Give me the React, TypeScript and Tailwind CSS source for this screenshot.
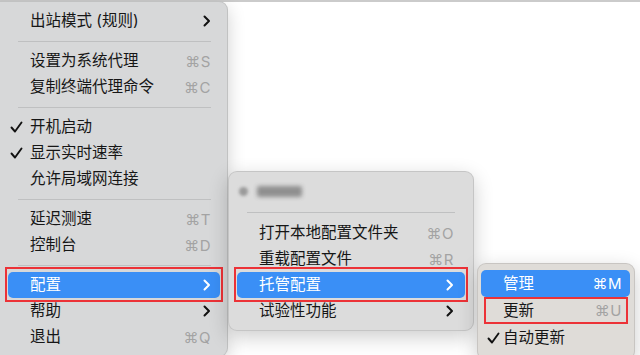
type Item =
  | { kind: "sep" }
  | {
      kind: "row";
      label: string;
      shortcut?: string;
      sub?: boolean;
      checked?: boolean;
      active?: boolean;
      box?: string;
    };

const outerBox = "-inset-x-[3px] -top-[5px] -bottom-[4px]";

const mainMenu: Item[] = [
  { kind: "row", label: "出站模式 (规则)", sub: true },
  { kind: "sep" },
  { kind: "row", label: "设置为系统代理", shortcut: "⌘S" },
  { kind: "row", label: "复制终端代理命令", shortcut: "⌘C" },
  { kind: "sep" },
  { kind: "row", label: "开机启动", checked: true },
  { kind: "row", label: "显示实时速率", checked: true },
  { kind: "row", label: "允许局域网连接" },
  { kind: "sep" },
  { kind: "row", label: "延迟测速", shortcut: "⌘T" },
  { kind: "row", label: "控制台", shortcut: "⌘D" },
  { kind: "sep" },
  { kind: "row", label: "配置", sub: true, active: true, box: outerBox },
  { kind: "row", label: "帮助", sub: true },
  { kind: "row", label: "退出", shortcut: "⌘Q" },
];

const configMenu: Item[] = [
  { kind: "row", label: "打开本地配置文件夹", shortcut: "⌘O" },
  { kind: "row", label: "重载配置文件", shortcut: "⌘R" },
  { kind: "row", label: "托管配置", sub: true, active: true, box: outerBox },
  { kind: "row", label: "试验性功能", sub: true },
];

const hostedMenu: Item[] = [
  { kind: "row", label: "管理", shortcut: "⌘M", active: true },
  { kind: "row", label: "更新", shortcut: "⌘U", box: "left-[3px] right-[2px] top-0 bottom-0" },
  { kind: "row", label: "自动更新", checked: true },
];

const font = "font-['Inter','Noto_Sans_CJK_SC','DejaVu_Sans',sans-serif]";

function Chevron({ white }: { white?: boolean }) {
  return (
    <svg width="8" height="12" viewBox="0 0 8 12" fill="none">
      <path
        d="M1.5 1.5l4.5 4.5-4.5 4.5"
        stroke={white ? "#ffffff" : "#111111"}
        strokeWidth="2"
        strokeLinecap="round"
        strokeLinejoin="round"
      />
    </svg>
  );
}

function Check() {
  return (
    <svg width="13" height="12" viewBox="0 0 13 12" fill="none">
      <path
        d="M1.5 6.5l3.5 4L11.5 1.5"
        stroke="#111111"
        strokeWidth="1.9"
        strokeLinecap="round"
        strokeLinejoin="round"
      />
    </svg>
  );
}

function Separator({ inset, h }: { inset: string; h: string }) {
  return (
    <div className={`flex items-center ${h} ${inset}`}>
      <div className="h-px w-full bg-[#bfc0c1]"></div>
    </div>
  );
}

function Row({
  item,
  h,
  mx,
  checkPl,
  pr,
}: {
  item: Extract<Item, { kind: "row" }>;
  h: string;
  mx: string;
  checkPl: string;
  pr: string;
}) {
  return (
    <div className={`relative ${h} ${mx}`}>
      <div
        className={`flex h-full items-center rounded-[5px] ${pr} ${
          item.active ? "bg-[#3a8ff6] text-white" : "text-[#161616]"
        }`}
      >
        <div className="w-0">
          <div className={checkPl}>{item.checked && <Check />}</div>
        </div>
        <span className="flex-1 pl-[22px] text-[15.5px] leading-none">
          {item.label}
        </span>
        {item.shortcut && (
          <span
            className={`text-[15px] leading-none tracking-[0.5px] ${
              item.active ? "text-white" : "text-[#a3a3a3]"
            }`}
          >
            {item.shortcut}
          </span>
        )}
        {item.sub && <Chevron white={item.active} />}
      </div>
      {item.box && (
        <div
          className={`pointer-events-none absolute border-[2.5px] border-[#ec3237] ${item.box}`}
        ></div>
      )}
    </div>
  );
}

export default function App() {
  return (
    <div className={`relative h-[355px] w-[640px] overflow-hidden bg-white ${font}`}>
      <div className="h-[2px] w-full bg-[#cbcbcb]"></div>

      {/* main menu */}
      <div className="absolute -left-[10px] top-[1px] w-[238px] rounded-[9px] border border-black/10 bg-[#d7d8d9] pt-[6px] pb-[6px] shadow-[0_6px_18px_rgba(0,0,0,0.18)]">
        {mainMenu.map((item, i) =>
          item.kind === "sep" ? (
            <Separator key={i} inset="pl-[27px] pr-[16px]" h="h-[14px]" />
          ) : (
            <Row
              key={i}
              item={item}
              h="h-[26px]"
              mx="ml-[17px] mr-[7px]"
              checkPl="ml-[2px] w-[13px]"
              pr="pr-[9px]"
            />
          )
        )}
      </div>

      {/* config submenu */}
      <div className="absolute left-[228px] top-[171px] w-[246px] rounded-[9px] border border-black/10 bg-[#dcdcdc] pt-[6px] pb-[6px] shadow-[0_6px_20px_rgba(0,0,0,0.2)]">
        <div className="flex h-[26px] items-center gap-[9px] pl-[10px]">
          <div className="h-[9px] w-[9px] rounded-full bg-[#9a9a9a] blur-[1.5px]"></div>
          <div className="h-[11px] w-[45px] rounded-[2px] bg-[#8f8f8f] blur-[2px]"></div>
        </div>
        <Separator inset="pl-[18px] pr-[18px]" h="h-[16px]" />
        {configMenu.map((item, i) =>
          item.kind === "row" ? (
            <Row
              key={i}
              item={item}
              h="h-[26px]"
              mx="mx-[8px]"
              checkPl=""
              pr="pr-[11px]"
            />
          ) : null
        )}
      </div>

      {/* hosted config submenu */}
      <div className="absolute left-[477px] top-[263px] w-[158px] rounded-[9px] border border-black/10 bg-[#dfdcd8] pt-[6px] pb-[8px] shadow-[0_6px_20px_rgba(0,0,0,0.2)]">
        {hostedMenu.map((item, i) =>
          item.kind === "row" ? (
            <Row
              key={i}
              item={item}
              h="h-[27px]"
              mx="ml-[3px] mr-[4px]"
              checkPl="ml-[6px] w-[13px]"
              pr="pr-[8px]"
            />
          ) : null
        )}
      </div>
    </div>
  );
}
